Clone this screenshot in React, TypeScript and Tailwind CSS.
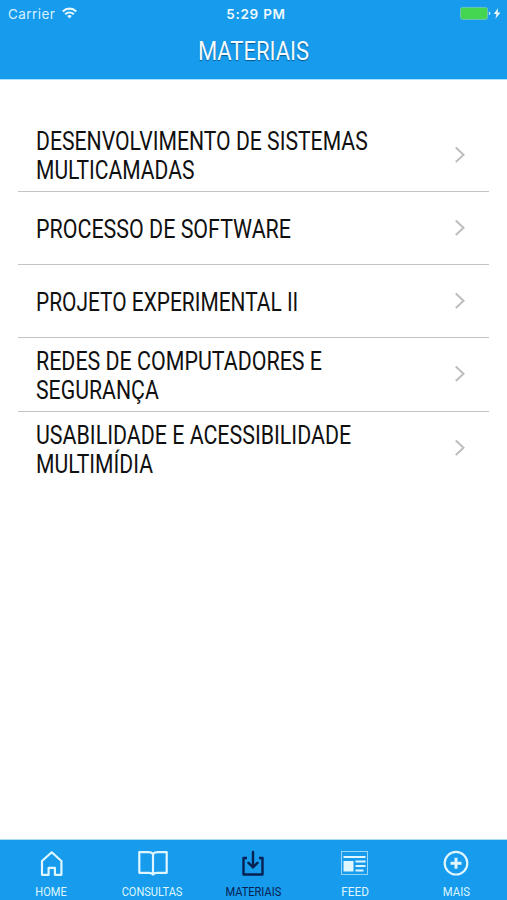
import type { ReactNode } from "react"

type Line = { text: string; scale: string }

const materials: Line[][] = [
  [
    { text: "DESENVOLVIMENTO DE SISTEMAS", scale: "scale-x-[0.847]" },
    { text: "MULTICAMADAS", scale: "scale-x-[0.842]" },
  ],
  [{ text: "PROCESSO DE SOFTWARE", scale: "scale-x-[0.857]" }],
  [{ text: "PROJETO EXPERIMENTAL II", scale: "scale-x-[0.836]" }],
  [
    { text: "REDES DE COMPUTADORES E", scale: "scale-x-[0.856]" },
    { text: "SEGURANÇA", scale: "scale-x-[0.85]" },
  ],
  [
    { text: "USABILIDADE E ACESSIBILIDADE", scale: "scale-x-[0.855]" },
    { text: "MULTIMÍDIA", scale: "scale-x-[0.846]" },
  ],
]

function StatusBar() {
  return (
    <div className="grid h-7 grid-cols-3 items-center pl-2 pr-1.5 text-[13.5px] text-white">
      <div className="flex items-center gap-[7px]">
        <span className="tracking-[0.45px] text-[#d8f1ff]">Carrier</span>
        <svg className="-mt-0.5" width="15" height="12" viewBox="0 0 15 12" fill="none" stroke="#e8f8ff" strokeWidth="2.1">
          <path d="M0.8 4.4a9.5 9.5 0 0 1 13.4 0" />
          <path d="M3.2 7.2a6.1 6.1 0 0 1 8.6 0" />
          <path d="M5.2 9.1a3.3 3.3 0 0 1 4.6 0L7.5 11.6z" fill="#e8f8ff" stroke="none" />
        </svg>
      </div>
      <span className="pl-[3px] text-center font-semibold tracking-[0.75px] text-[#effaff]">5:29 PM</span>
      <svg className="-mt-0.5 justify-self-end" width="42" height="14" viewBox="0 0 42 14">
        <rect x="1.5" y="1.4" width="27" height="12" rx="2" fill="#45d651" stroke="#6fc5bb" strokeWidth="0.9" />
        <path d="M29.8 5.6q1.6 0.3 1.6 1.8t-1.6 1.8z" fill="#b8e8ff" />
        <path d="M39.1 2 34.8 8h2.7l-1.1 4.800 5.100-6.300h-2.900z" fill="#effaff" />
      </svg>
    </div>
  )
}

type TabProps = {
  label: string
  scale?: string
  active?: boolean
  children: ReactNode
}

function Tab({ label, scale = "scale-x-[0.92]", active, children }: TabProps) {
  return (
    <button
      className={`flex flex-col items-center pt-[7px] ${active ? "text-[#062152]" : "text-[#dff6ff]"}`}
    >
      <svg width="32" height="32" viewBox="0 0 32 32" fill="none" stroke="currentColor" strokeWidth="2.2">
        {children}
      </svg>
      <span className={`mt-[6px] origin-center whitespace-nowrap text-xs leading-[15px] ${scale}`}>{label}</span>
    </button>
  )
}

export default function App() {
  return (
    <div className="flex h-[900px] w-[507px] flex-col overflow-hidden bg-white font-['Roboto',sans-serif]">
      {/* Header */}
      <header className="h-[79px] shrink-0 bg-[#169bed] font-['Inter',sans-serif] shadow-[0_1px_0_#a9e2fb]">
        <StatusBar />
        <h1 className="mt-[7px] origin-center scale-x-[0.88] text-center font-['Roboto',sans-serif] text-[25px] font-normal leading-[34px] text-[#f2fbff] [text-shadow:0_1px_1px_#08578b]">
          MATERIAIS
        </h1>
      </header>

      {/* Materials */}
      <main className="flex-1 px-[18px] pt-[39.5px]">
        {materials.map((lines, i) => (
          <div
            key={i}
            className="flex h-[73.25px] items-center justify-between border-b border-[#c4c4c4] pl-[18px] pr-[23px] last:border-b-0"
          >
            <div className="flex flex-col items-start pt-[3px] text-[25px] leading-[29px] text-[#101010]">
              {lines.map((line) => (
                <span key={line.text} className={`origin-left whitespace-nowrap ${line.scale}`}>
                  {line.text}
                </span>
              ))}
            </div>
            <svg width="12" height="18" viewBox="0 0 12 18" fill="none" stroke="#bdbdbd" strokeWidth="2">
              <path d="M1.8 1.500 9.500 8.800 1.800 16" />
            </svg>
          </div>
        ))}
      </main>

      {/* Tab bar */}
      <nav className="grid h-[60px] shrink-0 grid-cols-5 bg-[#169bed] shadow-[0_-1px_0_#a9dcf5]">
        <Tab label="HOME">
          <path d="M7 14 16.7 5.3 26.4 14v13.8h-6.5v-7h-6.3v7H7z" strokeLinejoin="round" />
        </Tab>
        <Tab label="CONSULTAS">
          <path d="M17 7Q15.5 5.2 12 5.2H3.3v20.6H13q2.6 0 4 1.8 1.4-1.8 4-1.8h9.7V5.2H22Q18.5 5.2 17 7zV27" strokeLinejoin="round" />
        </Tab>
        <Tab label="MATERIAIS" active>
          <path d="M10 11H6.5V27.5H25.5V11H22" strokeLinejoin="round" strokeWidth="2.4" />
          <path d="M16 5V20M11.5 15.8 16 20.3l4.5-4.5" strokeLinecap="round" strokeWidth="2.4" />
        </Tab>
        <Tab label="FEED" scale="scale-x-[0.98]">
          <rect x="2.5" y="4.5" width="26" height="23" strokeWidth="0.9" opacity="0.7" />
          <path d="M4.5 10h22M16.5 14.5h10M16.5 19h10M16.5 23.5h8" strokeWidth="2" />
          <rect x="4.5" y="14" width="10" height="10.5" fill="currentColor" stroke="none" />
        </Tab>
        <Tab label="MAIS" scale="scale-x-[0.94]">
          <circle cx="16" cy="16.2" r="11.3" />
          <path d="M16 10.7v11M10.5 16.2h11" strokeWidth="3" />
        </Tab>
      </nav>
    </div>
  )
}
